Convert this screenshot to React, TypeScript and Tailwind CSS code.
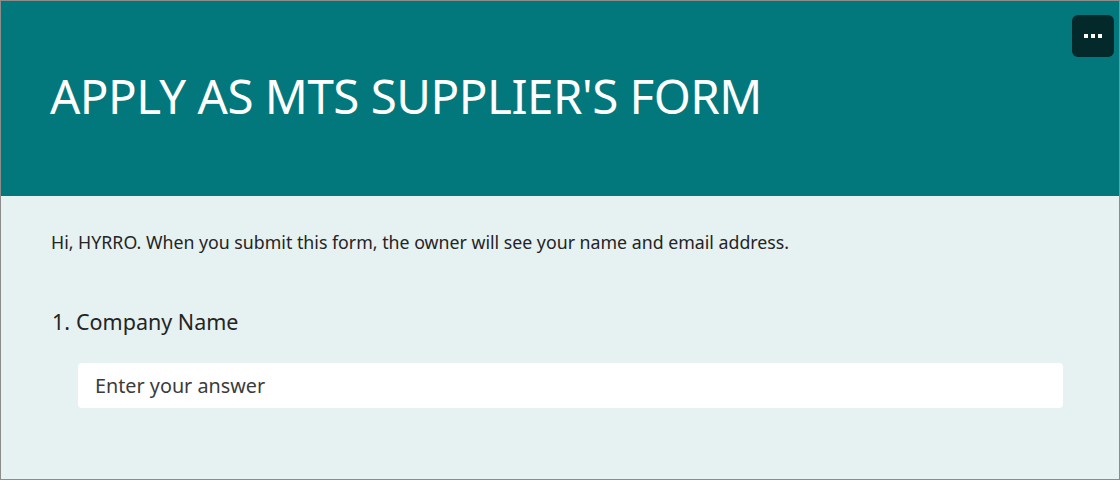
import React from "react";

export default function App() {
  return (
    <div className="w-[1120px] h-[480px] overflow-hidden border border-[#8c8c8c] bg-[#e6f1f1] font-['Noto_Sans',sans-serif]">
      {/* Header banner */}
      <div className="relative h-[195px] bg-[#03787c] flex items-center pl-[49px]">
        <h1 className="text-[47.5px] leading-none text-white tracking-[-0.5px] pb-[6px]">
          APPLY AS MTS SUPPLIER'S FORM
        </h1>
        <button className="absolute top-[14px] right-[5px] w-[42px] h-[42px] rounded-md bg-[#04292b] flex items-center justify-center gap-[3px]">
          <span className="w-[4px] h-[4px] bg-white"></span>
          <span className="w-[4px] h-[4px] bg-white"></span>
          <span className="w-[4px] h-[4px] bg-white"></span>
        </button>
      </div>

      {/* Body */}
      <div className="pl-[50px] pr-[56px] pt-[35px]">
        <p className="text-[17.75px] text-[#242424] leading-[22px]">
          Hi, HYRRO. When you submit this form, the owner will see your name and email address.
        </p>

        <div className="mt-[55px] flex items-baseline text-[21.5px] text-[#242424] leading-7">
          <span className="w-[25px] pl-[1px]">1.</span>
          <span>Company Name</span>
        </div>

        <div className="mt-[27px] ml-[27px] h-[45px] bg-white rounded-[4px] flex items-center px-[17px]">
          <span className="text-[19.8px] text-[#3b3b3b]">Enter your answer</span>
        </div>
      </div>
    </div>
  );
}
